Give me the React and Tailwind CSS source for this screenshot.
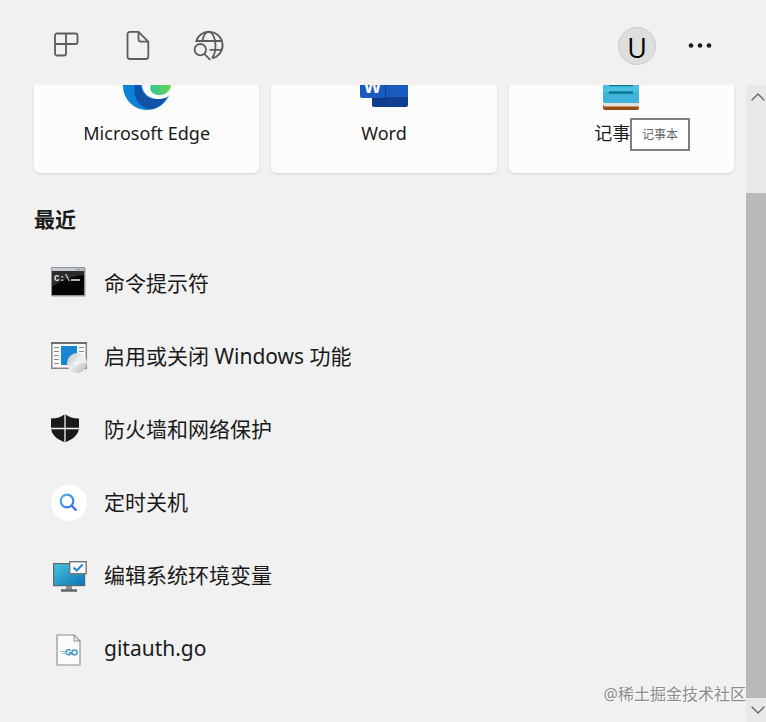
import { ChevronDown, ChevronUp } from "lucide-react"

function AppsIcon() {
    return (
        <svg viewBox="0 0 32 32" className="size-8" fill="none" stroke="#5c5c5c" strokeWidth="1.8">
            <path d="M7 3.500H25.500a2 2 0 0 1 2 2V12a2 2 0 0 1-2 2H16v9.500a2 2 0 0 1-2 2H7a2 2 0 0 1-2-2V5.500a2 2 0 0 1 2-2Z" />
            <path d="M16 3.500V14H5" />
        </svg>
    )
}

function DocumentIcon() {
    return (
        <svg viewBox="0 0 32 32" className="size-8" fill="none" stroke="#5c5c5c" strokeWidth="1.8" strokeLinejoin="round">
            <path d="M8 1.800h8.500l9.800 9.800V26.500a2.500 2.500 0 0 1-2.500 2.500H8a2.500 2.500 0 0 1-2.500-2.500V4.300A2.500 2.500 0 0 1 8 1.800Z" />
            <path d="M16.500 1.800v7.300a2.500 2.500 0 0 0 2.500 2.500h7.300" />
        </svg>
    )
}

function WebIcon() {
    return (
        <svg viewBox="2 0 32 32" className="size-8 overflow-visible" fill="none" stroke="#5c5c5c" strokeWidth="1.8">
            <path d="M4 12A13.500 13.500 0 1 1 20.500 28.300" />
            <path d="M4 11H30M17.500 19.800H30" />
            <path d="M10.500 11C11.500 5 14 1.800 17 1.800S23.500 7.500 23.500 15c0 6-1.200 10.500-3.500 13" />
            <circle cx="8.300" cy="19.700" r="5.700" />
            <path d="m12.300 23.800 6 6" />
        </svg>
    )
}

function EdgeIcon() {
    return (
        <svg viewBox="0 0 48 48" className="size-12">
            <defs>
                <linearGradient id="edge-green" x1="0" x2="1">
                    <stop offset="0" stopColor="#2fc3a0" />
                    <stop offset="1" stopColor="#69d548" />
                </linearGradient>
            </defs>
            <circle cx="24" cy="24" r="24" fill="#0d80d8" />
            <path d="M12 22c-3 14 5 25 16 25 7-1 12-5 15-11 1-2 0-2-2-1-12 5-22 0-24-13Z" fill="#1053a5" />
            <path d="M19 20c-1 10 6 17 16 17 6 0 10-2 13-5V20Z" fill="#fcfcfc" />
            <path d="M27 20c2 3-1 6 1 9 4 7 19 5 20-6V10H27Z" fill="url(#edge-green)" />
        </svg>
    )
}

function WordIcon() {
    return (
        <svg viewBox="0 0 48 48" className="size-12">
            <path d="M14 3h32a2 2 0 0 1 2 2v30H12V5a2 2 0 0 1 2-2Z" fill="#185abd" />
            <path d="M12 35h36v8a2 2 0 0 1-2 2H14a2 2 0 0 1-2-2Z" fill="#103f91" />
            <path d="M12 14h14v24H12Z" fill="#0b3378" opacity=".6" />
            <rect y="12" width="25" height="24" rx="2" fill="#185abd" />
            <text x="12.500" y="31" textAnchor="middle" fontSize="18" fontWeight="700" fill="#fff" fontFamily="Open Sans, sans-serif">W</text>
        </svg>
    )
}

function NotepadIcon() {
    return (
        <svg viewBox="0 0 48 48" className="size-12">
            <path d="M6 43h36v3a2 2 0 0 1-2 2H8a2 2 0 0 1-2-2Z" fill="#9a4b10" />
            <rect x="7" y="38" width="35" height="6.500" fill="#e3dfda" />
            <path d="M6 4h36v37H8a2 2 0 0 1-2-2Z" fill="#4cc0e2" />
            <path d="M6 30h36v11H8a2 2 0 0 1-2-2Z" fill="#41b3da" />
            <path d="M12 16h24M12 23h24M12 30.500h24" stroke="#0b7594" strokeWidth="2.500" />
        </svg>
    )
}

function TerminalIcon() {
    return (
        <svg viewBox="0 0 38 38" className="size-[38px]">
            <rect x="1.500" y="4" width="34.500" height="29" rx="1" fill="#a8a8a8" opacity=".6" />
            <rect x="1" y="3" width="34" height="29" rx="1" fill="#8e9296" />
            <rect x="2" y="4" width="32" height="3" fill="#c3cad0" />
            <path d="M26 5.500h7" stroke="#6f7479" strokeDasharray="1.500 1" />
            <rect x="2" y="7" width="32" height="24" fill="#050505" />
            <path d="M2 7h32v4C22 12 12 16 2 23Z" fill="#2c2c2c" />
            <text x="4" y="17" fontSize="9" fontWeight="700" fill="#eee" fontFamily="Liberation Mono, monospace">C:\</text>
            <path d="M21 16h9" stroke="#eee" strokeWidth="1.500" />
        </svg>
    )
}

function FeaturesIcon() {
    return (
        <svg viewBox="0 0 38 38" className="size-[38px]">
            <defs>
                <linearGradient id="disc" x1="0" y1="0" x2="1" y2="1">
                    <stop offset="0" stopColor="#b4babe" />
                    <stop offset=".45" stopColor="#eceeef" />
                    <stop offset="1" stopColor="#b3b7ba" />
                </linearGradient>
            </defs>
            <rect x="1.800" y="5.800" width="34.500" height="25.500" fill="#f8f8f8" stroke="#858585" strokeWidth="1.500" />
            <path d="M1 6h36" stroke="#6b6b6b" strokeWidth="1.800" />
            <path d="M4 10.500h5M4 14.500h5M4 18.500h5M4 22.500h5M4 26.500h5M29 10.500h5M29 14.500h5" stroke="#8b8b8b" strokeWidth="1.200" />
            <rect x="11" y="9" width="16" height="19" fill="#1686d3" />
            <circle cx="27" cy="26" r="10" fill="url(#disc)" />
            <path d="m27 26 7-7a10 10 0 0 1 3 7Z" fill="#fff" opacity=".5" />
            <circle cx="27" cy="26" r="2" fill="#f6f6f6" />
        </svg>
    )
}

function ShieldIcon() {
    return (
        <svg viewBox="0 0 38 38" className="size-[38px]">
            <path d="M15 4c4 3 8 4.500 14 4.500V17c0 7-5 12-14 15.500C6 29 1 24 1 17V8.500C7 8.500 11 7 15 4Z" fill="#1a1a1a" />
            <path d="M15 3v30M0 18.500h30" stroke="#f1f1f1" strokeWidth="1.300" />
        </svg>
    )
}

function SearchIcon() {
    return (
        <svg viewBox="0 0 38 38" className="size-[38px]">
            <defs>
                <linearGradient id="lens" x1="0" y1="0" x2="1" y2="1">
                    <stop offset="0" stopColor="#49b8ec" />
                    <stop offset="1" stopColor="#3a6cf0" />
                </linearGradient>
            </defs>
            <circle cx="19" cy="20" r="18" fill="#fff" />
            <circle cx="17" cy="18" r="6.300" fill="none" stroke="url(#lens)" strokeWidth="2.200" />
            <path d="m21.500 22.500 5 5" stroke="#3a74ee" strokeWidth="2.400" />
        </svg>
    )
}

function MonitorIcon() {
    return (
        <svg viewBox="0 0 38 38" className="size-[38px]">
            <defs>
                <linearGradient id="screen" x1="0" y1="0" x2="1" y2="1">
                    <stop offset="0" stopColor="#49c5dc" />
                    <stop offset="1" stopColor="#0873b8" />
                </linearGradient>
            </defs>
            <path d="M16 29h6v5h-6Z" fill="#8c9399" />
            <path d="M11 34.500h16" stroke="#5f666b" strokeWidth="2.500" />
            <rect x="3.600" y="7.600" width="31" height="22" fill="url(#screen)" stroke="#5b6a72" strokeWidth="1.200" />
            <rect x="19.700" y="5.700" width="16.500" height="12" fill="#fafafa" stroke="#777" strokeWidth="1.400" />
            <path d="m23.500 11.500 3.200 3 6-6" fill="none" stroke="#2287d6" strokeWidth="2" />
        </svg>
    )
}

function GoFileIcon() {
    return (
        <svg viewBox="0 0 38 38" className="size-[38px]">
            <path d="M7 6h17l6 6v24H7Z" fill="#fbfbfb" stroke="#909090" strokeWidth="1.200" />
            <path d="M24 6v6h6Z" fill="#e3e3e3" stroke="#909090" />
            <path d="M10 22.500h6M12 24.500h3" stroke="#8fc3df" />
            <path d="M20.500 21.500a2.700 2.500 0 1 0 .8 2.200H18.500" fill="none" stroke="#4299cb" strokeWidth="1.500" />
            <ellipse cx="24.500" cy="23.500" rx="2.600" ry="2.400" fill="none" stroke="#4299cb" strokeWidth="1.500" />
        </svg>
    )
}

const apps = [
    { name: "Microsoft Edge", Icon: EdgeIcon },
    { name: "Word", Icon: WordIcon },
    { name: "记事本", Icon: NotepadIcon, tooltip: "记事本" },
]

const recent = [
    { name: "命令提示符", Icon: TerminalIcon },
    { name: "启用或关闭 Windows 功能", Icon: FeaturesIcon },
    { name: "防火墙和网络保护", Icon: ShieldIcon },
    { name: "定时关机", Icon: SearchIcon },
    { name: "编辑系统环境变量", Icon: MonitorIcon },
    { name: "gitauth.go", Icon: GoFileIcon },
]

function AppCard({ name, Icon, tooltip }) {
    return (
        <button className="relative flex h-32 flex-col items-center rounded-md bg-[#fcfcfc] pt-[17px] shadow">
            <Icon />
            <span className="mt-[9px] text-[18px] leading-7">{name}</span>
            {tooltip && (
                <span role="tooltip" className="absolute right-11 bottom-[22px] flex h-[33px] w-[60px] items-center justify-center border-2 border-[#808080] bg-white text-[12px] text-[#666]">
                    {tooltip}
                </span>
            )}
        </button>
    )
}

function RecentItem({ name, Icon }) {
    return (
        <li>
            <a href="#" className="flex h-[73px] items-center gap-4 pl-4">
                <Icon />
                <span className="text-[21px] leading-8">{name}</span>
            </a>
        </li>
    )
}

function Scrollbar() {
    return (
        <div className="flex w-5 shrink-0 flex-col bg-[#e8e8e8] text-[#606060]">
            <button aria-label="Scroll up" className="flex h-6 items-center justify-center pl-1">
                <ChevronUp size={24} strokeWidth={1.25} className="shrink-0" />
            </button>
            <div className="mt-[84px] flex-1 bg-[#b9b9b9]" />
            <button aria-label="Scroll down" className="flex h-6 items-center justify-center pl-1">
                <ChevronDown size={24} strokeWidth={1.25} className="shrink-0" />
            </button>
        </div>
    )
}

export default function App() {
    return (
        <div className="relative flex h-screen flex-col overflow-hidden bg-[#f1f1f1] font-['Noto_Sans','Noto_Sans_CJK_SC',sans-serif] text-[#1a1a1a]">
            <header className="flex h-[85px] shrink-0 items-center justify-between px-[50px] pt-[7px]">
                <nav className="flex gap-10">
                    <button aria-label="Apps"><AppsIcon /></button>
                    <button aria-label="Documents"><DocumentIcon /></button>
                    <button aria-label="Web"><WebIcon /></button>
                </nav>
                <div className="flex items-center gap-7">
                    <button className="flex size-[38px] items-center justify-center rounded-full border border-[#cbcbcb] bg-[#dedede] pt-1 font-['Open_Sans',sans-serif] text-[27px] leading-8 text-black">U</button>
                    <button aria-label="More">
                        <svg viewBox="0 0 32 32" className="size-8" fill="#1a1a1a">
                            <circle cx="7" cy="15.500" r="2.300" />
                            <circle cx="16" cy="15.500" r="2.300" />
                            <circle cx="25" cy="15.500" r="2.300" />
                        </svg>
                    </button>
                </div>
            </header>
            <div className="flex min-h-0 flex-1">
                <main className="flex-1 overflow-hidden pr-3 pl-[34px]">
                    {/* Top row is scrolled partly out of view */}
                    <section className="-mt-10 grid grid-cols-3 gap-3">
                        {apps.map((app) => (
                            <AppCard key={app.name} {...app} />
                        ))}
                    </section>
                    <section className="pt-[30px]">
                        <h2 className="text-[21px] leading-8 font-bold">最近</h2>
                        <ul className="pt-[11px]">
                            {recent.map((item) => (
                                <RecentItem key={item.name} {...item} />
                            ))}
                        </ul>
                    </section>
                </main>
                <Scrollbar />
            </div>
            <span className="absolute right-5 bottom-4 text-[16px] leading-6 text-[#8c8c8c] [text-shadow:1px_1px_0_#fff]">@稀土掘金技术社区</span>
        </div>
    )
}
